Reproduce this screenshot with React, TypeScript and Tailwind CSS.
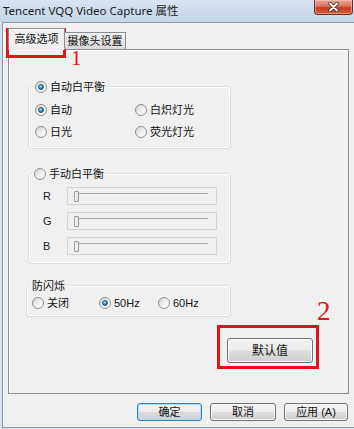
import React from 'react'

const cjk = "font-['Liberation_Sans','Noto_Sans_CJK_SC',sans-serif]"

const Radio: React.FC<{ on?: boolean }> = ({ on }) => (
  <span className="inline-flex h-[12px] w-[12px] shrink-0 items-center justify-center rounded-full border border-[#8f8f8f] bg-[linear-gradient(135deg,#d2d2d2,#f4f4f4_60%,#ffffff)]">
    {on && (
      <span className="h-[6px] w-[6px] rounded-full border border-[#174f7c] bg-[radial-gradient(circle_at_35%_30%,#bfe6ff,#2f8fd0_55%,#125c97)]" />
    )}
  </span>
)

const Option: React.FC<{ on?: boolean; label: string; className?: string }> = ({ on, label, className }) => (
  <label className={`flex h-[16px] items-center gap-[3px] ${className ?? ''}`}>
    <Radio on={on} />
    <span className="leading-[16px]">{label}</span>
  </label>
)

const Slider: React.FC = () => (
  <div className="relative h-[18px] w-[150px] border border-[#d4d4d4] bg-[#f0f0f0]">
    <div className="ml-[10px] mr-[8px] mt-[5px] h-[2px] border-t border-[#a9a9a9] border-b-white" />
    {/* thumb sits on the track */}
    <div className="absolute left-[6px] top-[3px] h-[11px] w-[5px] rounded-[1px] border border-[#9b9b9b] bg-[linear-gradient(90deg,#fafafa,#e2e2e2)]" />
  </div>
)

const Button: React.FC<{ children: React.ReactNode; className: string; primary?: boolean }> = ({
  children,
  className,
  primary,
}) => (
  <button
    className={`flex items-center justify-center rounded-[3px] border bg-[linear-gradient(#f3f3f3,#ebebeb_48%,#dddddd_52%,#cfcfcf)] text-[11px] leading-none text-[#111] ${
      primary
        ? 'border-[#3c7fb1] shadow-[inset_0_0_0_1px_#a9dcf6]'
        : 'border-[#707070] shadow-[inset_0_0_0_1px_#fbfbfb]'
    } ${className}`}
  >
    {children}
  </button>
)

export default function App() {
  return (
    <div className={`relative flex h-[429px] w-[354px] flex-col overflow-hidden bg-[#d6e1ee] text-[11px] text-[#111] ${cjk}`}>
      {/* Title bar */}
      <div className="flex h-[22px] shrink-0 items-start justify-between bg-[linear-gradient(#d9e4f0,#cbd9e9_60%,#c6d5e7)]">
        <span className="pl-[3px] pt-[3px] font-['Noto_Sans','Noto_Sans_CJK_SC',sans-serif] text-[11.5px] leading-[16px] text-[#1b1b1b]">
          Tencent VQQ Video Capture 属性
        </span>
        <div className="mr-[1px] flex h-[15px] w-[39px] items-center justify-center rounded-b-[4px] border border-t-0 border-[#6e2a20] bg-[linear-gradient(#e9a898,#d9735f_45%,#c43b24_55%,#d2613f)] shadow-[inset_0_0_0_1px_rgba(255,210,200,0.5)]">
          <svg width="11" height="10" viewBox="0 0 11 10">
            <path d="M2 1.5 L9 8.5 M9 1.5 L2 8.5" stroke="#4a1610" strokeWidth="3.4" strokeLinecap="round" />
            <path d="M2 1.5 L9 8.5 M9 1.5 L2 8.5" stroke="#ffffff" strokeWidth="2" strokeLinecap="round" />
          </svg>
        </div>
      </div>

      {/* Client area */}
      <div className="ml-[2px] mb-[1px] flex flex-1 flex-col border-l border-t border-b border-[#8c99a8] bg-[#f0f0f0] pl-[5px] pt-[5px]">
        {/* Tabs */}
        <div className="relative z-10 flex h-[21px] items-end">
          <div className="-mb-[1px] flex h-[22px] w-[57px] justify-center border border-b-0 border-[#898c95] bg-[#f0f0f0] pt-[2px] leading-[16px] shadow-[inset_1px_1px_0_#ffffff]">
            高级选项
          </div>
          <div className="flex h-[17px] w-[61px] justify-center border border-l-0 border-b-0 border-[#898c95] bg-[linear-gradient(#f2f2f2,#e4e4e4_50%,#d9d9d9)] leading-[16px]">
            摄像头设置
          </div>
        </div>

        {/* Tab page */}
        <div className="flex h-[345px] w-[341px] flex-col border border-[#898c95] shadow-[inset_1px_1px_0_#ffffff]">
          {/* Auto white balance */}
          <div className="ml-[19px] mt-[36px] w-[203px] rounded-[3px] border border-[#d5dfe5] pb-[8px] shadow-[inset_0_0_0_1px_#ffffff]">
            <div className="-mt-[8px] ml-[4px] flex w-fit bg-[#f0f0f0] px-[2px]">
              <Option on label="自动白平衡" />
            </div>
            <div className="mt-[7px] grid grid-cols-[100px_1fr] gap-y-[6px] pl-[6px]">
              <Option on label="自动" />
              <Option label="白炽灯光" />
              <Option label="日光" />
              <Option label="荧光灯光" />
            </div>
          </div>

          {/* Manual white balance */}
          <div className="ml-[19px] mt-[24px] w-[203px] rounded-[3px] border border-[#d5dfe5] pb-[8px] shadow-[inset_0_0_0_1px_#ffffff]">
            <div className="-mt-[8px] ml-[3px] flex w-fit bg-[#f0f0f0] px-[2px]">
              <Option label="手动白平衡" />
            </div>
            <div className="mt-[5px] flex flex-col gap-[7px] pl-[14px]">
              {['R', 'G', 'B'].map((c) => (
                <div key={c} className="flex items-center">
                  <span className="w-[24px] font-['Liberation_Sans',sans-serif] text-[11px] text-[#222]">{c}</span>
                  <Slider />
                </div>
              ))}
            </div>
          </div>

          {/* Anti flicker */}
          <div className="ml-[17px] mt-[21px] w-[205px] rounded-[3px] border border-[#d5dfe5] pb-[5px] shadow-[inset_0_0_0_1px_#ffffff]">
            <div className="-mt-[8px] ml-[3px] w-fit bg-[#f0f0f0] px-[2px] leading-[16px]">防闪烁</div>
            <div className="mt-[1px] flex pl-[5px]">
              <Option label="关闭" className="w-[67px]" />
              <Option on label="50Hz" className="w-[59px] font-['Liberation_Sans',sans-serif]" />
              <Option label="60Hz" className="font-['Liberation_Sans',sans-serif]" />
            </div>
          </div>

          <Button className="ml-[218px] mt-[21px] h-[25px] w-[86px] text-[12px]">默认值</Button>
        </div>

        {/* Dialog buttons */}
        <div className="mt-[9px] flex w-[341px] justify-end gap-[8px] pr-[1px]">
          <Button primary className="h-[18px] w-[65px]">确定</Button>
          <Button className="h-[18px] w-[66px]">取消</Button>
          <Button className="h-[18px] w-[64px]">应用 (A)</Button>
        </div>
      </div>

      {/* Red annotations */}
      <div className="absolute left-[6px] top-[28px] h-[30px] w-[60px] border-[3px] border-[#e5121b]" />
      <div className="absolute left-[71px] top-[48px] font-['Liberation_Serif',serif] text-[21px] leading-none text-[#e5121b]">1</div>
      <div className="absolute left-[217px] top-[325px] h-[44px] w-[102px] border-[3px] border-[#e5121b]" />
      <div className="absolute left-[317px] top-[298px] font-['Liberation_Serif',serif] text-[27px] leading-none text-[#e5121b]">2</div>
    </div>
  )
}
